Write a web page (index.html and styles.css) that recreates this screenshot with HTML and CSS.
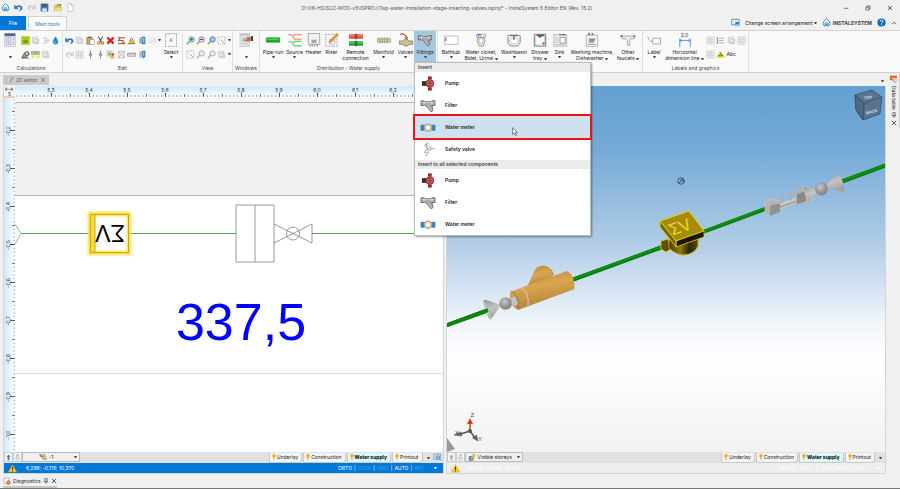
FILE: index.html
```html
<!DOCTYPE html>
<html lang="en">
<head>
<meta charset="utf-8">
<title>InstalSystem 5 Editor</title>
<link rel="stylesheet" href="styles.css">
</head>
<body>
<svg class="sprite" aria-hidden="true">
  <defs>
    <linearGradient id="gCylinder" x1="0" y1="0" x2="1" y2="0"><stop offset="0" stop-color="#4a3d00"/><stop offset=".4" stop-color="#8d7a10"/><stop offset=".7" stop-color="#2c2500"/><stop offset="1" stop-color="#5c4e00"/></linearGradient>
    <linearGradient id="gBrass" x1="0" y1="0" x2=".3" y2="1"><stop offset="0" stop-color="#b98a42"/><stop offset=".45" stop-color="#d9a550"/><stop offset="1" stop-color="#b5843a"/></linearGradient>
    <linearGradient id="gSteel" x1="0" y1="0" x2=".3" y2="1"><stop offset="0" stop-color="#8e8e8e"/><stop offset=".5" stop-color="#c4c4c4"/><stop offset="1" stop-color="#a0a0a0"/></linearGradient>
    <radialGradient id="gBall" cx=".4" cy=".35"><stop offset="0" stop-color="#c8c8c8"/><stop offset="1" stop-color="#8a8a8a"/></radialGradient>
  </defs>
  <symbol id="undo" viewBox="0 0 10 10"><path d="M.5 2v4.500h4L3 5q3-2 4.500.5Q8 7.500 5.500 8.500 9.500 8 9 5 8 1.500 2 3.800z" fill="#2678c8" stroke="#14508f" stroke-width=".4"/></symbol>
  <symbol id="redo" viewBox="0 0 10 10"><path d="M9.500 2v4.500h-4L7 5Q4 3 2.500 5.500 2 7.500 4.500 8.500.5 8 1 5 2 1.500 8 3.800z" fill="#d8d8d8" stroke="#b5b5b5" stroke-width=".4"/></symbol>
  <symbol id="save" viewBox="0 0 10 10"><path d="M1 1h8v8H1z" fill="#3c7fc4" stroke="#2a5a90" stroke-width=".5"/><path d="M2.500 1h5v3.200h-5z" fill="#555"/><path d="M2.500 6h5v3h-5z" fill="#dde8f2"/></symbol>
  <symbol id="open" viewBox="0 0 10 10"><path d="M1 2h3l1 1h4v6H1z" fill="#f0c75a"/><path d="M1 9l1-4h8L9 9z" fill="#f8dc86" stroke="#c79b2b" stroke-width=".3"/><path d="M3.500 3.500Q5 .2 8 1.500L8.300.5 9.500 3l-2.700.6.5-1Q5.500 2 4.500 4z" fill="#39a845"/></symbol>
  <symbol id="page" viewBox="0 0 10 10"><path d="M2 .8h4L8 3v6.200H2zM6 .8V3h2" fill="#fff" stroke="#aaa" stroke-width=".6"/></symbol>
  <symbol id="brand" viewBox="0 0 10 10"><path d="M5 .8Q8.800 3.500 8.800 6q0 2.500-2.300 3V5.500Q5 4 3.500 5.500V9Q1.200 8.500 1.200 6 1.200 3.500 5 .8z" fill="#fff" stroke="#1d86c8" stroke-width="1"/><circle cx="5" cy="7.500" r="1.200" fill="#1d86c8"/></symbol>
  <symbol id="calc" viewBox="0 0 14 16"><path d="M1 .5h12v15H1z" fill="#eceef5" stroke="#9298ae" stroke-width=".6"/><path d="M1 .5h12v3.200H1z" fill="#4e6198"/><path d="M2.500 5.500h7M2.500 8h7M2.500 10.500h7M2.500 13h7" stroke="#9299b4" stroke-width="1.300" stroke-dasharray="1.500 .9"/><path d="M11 5v3M11 10v3.500" stroke="#d4a5a5" stroke-width="1.300"/></symbol>
  <symbol id="grate" viewBox="0 0 10 10"><path d="M0 0h10v10H0z" fill="#a2e22b"/><path d="M2 4.500h6V8H2z" fill="#c98a34"/><path d="M2 2.500h6M3.500 4v4M5 4v4M6.500 4v4" stroke="#8c5f25" stroke-width=".5"/></symbol>
  <symbol id="ghost" viewBox="0 0 10 10"><path d="M1.500 1.500h5.500v6H1.500zM3.500 3.500h5v5h-5z" fill="#eee" stroke="#bbb" stroke-width=".7"/></symbol>
  <symbol id="ghostgrid" viewBox="0 0 10 10"><path d="M1 1h8v8H1zM1 3.500h8M1 6.200h8M3.500 1v8M6.200 1v8" fill="#f4f4f4" stroke="#bdbdbd" stroke-width=".6"/></symbol>
  <symbol id="ghostlist" viewBox="0 0 10 10"><path d="M1.500 1v8" stroke="#888" stroke-width="1.200"/><path d="M3 2.500h6M3 5h5M3 7.500h6" stroke="#b5b5b5" stroke-width="1.200"/></symbol>
  <symbol id="ghostsnow" viewBox="0 0 10 10"><path d="M2 2q3-1 3 3T2 8M5 2q3.500.5 3.500 3T5 8M4 5h4" fill="none" stroke="#c2c2c2" stroke-width="1"/></symbol>
  <symbol id="drop" viewBox="0 0 10 10"><path d="M5 .5Q8 4 8 6.500 7.800 9.500 5 9.500T2 6.500Q2 4 5 .5z" fill="#1f8ad2"/><path d="M3.800 6q0 1.800 1.500 2" fill="none" stroke="#a8dcf7" stroke-width=".9"/></symbol>
  <symbol id="find" viewBox="0 0 10 10"><path d="M.8 8.500L4 3l4-1 1 3-3 3z" fill="#a59a92" stroke="#453d38" stroke-width=".7"/><circle cx="6.500" cy="4" r="2" fill="#e0dcd8" stroke="#333" stroke-width=".8"/><path d="M1 9h8" stroke="#733" stroke-width=".8"/></symbol>
  <symbol id="marker" viewBox="0 0 10 10"><path d="M.5 1.500h9V5h-9z" fill="#cfcfcf" stroke="#777" stroke-width=".5"/><path d="M.5 6.200h3.500v2.800H.5zM6 6.200h3.500v2.800H6z" fill="#f4f11c"/><path d="M2 3.200h6" stroke="#555" stroke-width=".7"/></symbol>
  <symbol id="paste" viewBox="0 0 10 10"><path d="M1 1.500h6V9H1z" fill="#d5a263" stroke="#7d5527" stroke-width=".6"/><path d="M2.500.7h3v1.600h-3z" fill="#666"/><path d="M4.500 4h4.800v5.500H4.500z" fill="#fff" stroke="#888" stroke-width=".6"/></symbol>
  <symbol id="cut" viewBox="0 0 10 10"><path d="M2.500.5l3.500 6M7.500.5l-3.500 6" stroke="#555" stroke-width="1.200"/><circle cx="3" cy="7.800" r="1.400" fill="none" stroke="#d98a14" stroke-width="1.200"/><circle cx="7" cy="7.800" r="1.400" fill="none" stroke="#b8700d" stroke-width="1.200"/></symbol>
  <symbol id="del" viewBox="0 0 10 10"><path d="M1 2.500L2.500 1 5 3.500 7.500 1 9 2.500 6.800 5 9 7.500 7.500 9 5 6.700 2.500 9 1 7.500 3.200 5z" fill="#e02020" stroke="#8d0d0d" stroke-width=".5"/></symbol>
  <symbol id="join" viewBox="0 0 10 10"><path d="M1 2h8M1 8.500h8M3 2v3h4v3.500" fill="none" stroke="#6a4f23" stroke-width="1"/><path d="M4.500 3.500L6 6h3v1.500H5z" fill="#f0a21c"/><circle cx="2" cy="5" r="1" fill="#d24"/></symbol>
  <symbol id="split" viewBox="0 0 10 10"><path d="M1 8.500h8M3 8.500V5l2-3 2 3v3.500" fill="none" stroke="#6a5a43" stroke-width=".9"/><path d="M3.500 4.500h4L9 7.500H2z" fill="#f0b12c"/></symbol>
  <symbol id="upblue" viewBox="0 0 10 10"><path d="M1.500 1.500h3v7h-3z" fill="#aaa"/><path d="M4.500.8h3.700v8.400H4.500z" fill="#2c84ce"/><path d="M6.300 2.500v5M5.300 3.800l1-1.300 1 1.300" fill="none" stroke="#fff" stroke-width=".7"/></symbol>
  <symbol id="downblue" viewBox="0 0 10 10"><path d="M1.500 1.500h3v7h-3z" fill="#bbb"/><path d="M4.500.8h3.700v6.200L6.300 9.800 4.500 7z" fill="#2c84ce"/><path d="M6.300 2v5" stroke="#fff" stroke-width=".7"/></symbol>
  <symbol id="check" viewBox="0 0 10 10"><circle cx="5" cy="5" r="3.500" fill="#f3f3f3" stroke="#d5d5d5" stroke-width=".7"/><path d="M3.300 5l1.300 1.400 2.500-3" fill="none" stroke="#ccc"/></symbol>
  <symbol id="node" viewBox="0 0 10 10"><path d="M5 .5v9" stroke="#777" stroke-width=".9"/><circle cx="5" cy="5" r="1.500" fill="#aaa" stroke="#666" stroke-width=".5"/></symbol>
  <symbol id="mixed" viewBox="0 0 10 10"><path d="M1 1h6v6H1z" fill="#ddd" stroke="#888" stroke-width=".5" stroke-dasharray="1 .5"/><path d="M2.500 3h3v3h-3z" fill="#8fae82"/><circle cx="7.500" cy="5" r="1.400" fill="#d33"/><path d="M5 6.500h4v3H5z" fill="#e8c21d"/></symbol>
  <symbol id="cross" viewBox="0 0 10 10"><path d="M2 1.500h6v7H2zM1 1l8 8M9 1L1 9" fill="none" stroke="#aaa" stroke-width=".8"/></symbol>
  <symbol id="rule" viewBox="0 0 10 10"><path d="M.5 3.500h9V7h-9z" fill="#ddd" stroke="#777" stroke-width=".6"/><path d="M2 3.500v1.500M4 3.500v1.500M6 3.500v1.500M8 3.500v1.500" stroke="#666" stroke-width=".5"/></symbol>
  <symbol id="selectA" viewBox="0 0 14 16"><path d="M.7.7h12.600v14.600H.7z" fill="none" stroke="#8b8b8b" stroke-width=".9" stroke-dasharray="2 1.200"/></symbol>
  <symbol id="zoomin" viewBox="0 0 10 10"><path d="M1 9.200l3-3.400" stroke="#d2923f" stroke-width="1.700"/><circle cx="6.200" cy="3.800" r="2.900" fill="#dcefff" stroke="#3b78b8" stroke-width=".9"/><path d="M6.200 2v3.600M4.400 3.800H8" stroke="#1c9c30" stroke-width="1.300"/></symbol>
  <symbol id="zoomout" viewBox="0 0 10 10"><path d="M1 9.200l3-3.400" stroke="#d2923f" stroke-width="1.700"/><circle cx="6.200" cy="3.800" r="2.900" fill="#eaf2ff" stroke="#3b78b8" stroke-width=".9"/><path d="M4.400 3.800H8" stroke="#c22" stroke-width="1.400"/></symbol>
  <symbol id="zoomall" viewBox="0 0 10 10"><path d="M1 9.200l3-3.400" stroke="#d2923f" stroke-width="1.700"/><circle cx="6.200" cy="3.800" r="2.900" fill="#a9cdf2" stroke="#2660a8" stroke-width=".9"/></symbol>
  <symbol id="zoomfit" viewBox="0 0 10 10"><path d="M1 9.200l3-3.400" stroke="#d2a36f" stroke-width="1.400"/><circle cx="6.200" cy="3.800" r="2.900" fill="#e4f1fb" stroke="#7ba3c8" stroke-width=".9"/></symbol>
  <symbol id="marquee" viewBox="0 0 10 10"><path d="M1 1h8v8H1z" fill="none" stroke="#aaa" stroke-width=".9" stroke-dasharray="1.500 .8"/><path d="M4 4l4 4" stroke="#999"/></symbol>
  <symbol id="windows" viewBox="0 0 16 16"><path d="M1 .5h11v15H1z" fill="#e2e2e2" stroke="#bbb" stroke-width=".6"/><path d="M1 .5h11V3H1z" fill="#c9c9c9"/><path d="M3 6h5M3 9h7M3 12h7" stroke="#bbb"/><path d="M15.500 4v4.500l-5 1.500-5.500-1.500Q4 7 6 7l3 .5-1-2.500z" fill="#b87555"/><path d="M14 3.500h2v5.500h-2z" fill="#2d3b52"/></symbol>
  <symbol id="pipe" viewBox="0 0 16 16"><path d="M.5 5.500h15v5H.5z" fill="#12b81e" stroke="#0a7412" stroke-width=".7"/><path d="M1 7h14" stroke="#83f089" stroke-width=".8"/></symbol>
  <symbol id="source" viewBox="0 0 16 16"><path d="M15.500 2H7L5.500 4 4 2H.5M15.500 7H7L5.500 4.500" fill="none" stroke="#f06a58" stroke-width="1.100"/><path d="M15.500 9.500H7L5.500 12 4 10H.5M15.500 14.800H7L5.500 12.500" fill="none" stroke="#30c04a" stroke-width="1.100"/></symbol>
  <symbol id="heater" viewBox="0 0 16 16"><path d="M1.500.5h13V13h-13z" fill="#f2f2f2" stroke="#888" stroke-width=".8"/><path d="M5.500 8h5v3h-5z" fill="#9bb" stroke="#777" stroke-width=".5"/><path d="M3.500 15.500v-2M6 15.500v-2" stroke="#d33"/><path d="M9 15.500v-2M12 15.500v-2" stroke="#65d"/></symbol>
  <symbol id="riser" viewBox="0 0 16 16"><path d="M.8 1.500h13v13.700H.8z" fill="none" stroke="#777" stroke-width=".8" stroke-dasharray="1.700 1.200"/><circle cx="8" cy="10" r="3.500" fill="none" stroke="#aaa" stroke-width=".8"/><path d="M5 11l1-3 7.500-7.500L15.500 2 8 10z" fill="#efa12a" stroke="#8c6230" stroke-width=".5"/></symbol>
  <symbol id="remote" viewBox="0 0 16 16"><path d="M0 1.500h7v5H0zM9 1.500h7v5H9z" fill="#e9513c"/><path d="M0 3h16" stroke="#f9a08c" stroke-width=".8"/><path d="M6.500 1h3v6h-3z" fill="#8c4a43"/><path d="M0 9.500h7v5H0zM9 9.500h7v5H9z" fill="#1cad2c"/><path d="M0 11h16" stroke="#7fe08c" stroke-width=".8"/><path d="M6.500 9h3v6h-3z" fill="#3f6c45"/></symbol>
  <symbol id="manifold" viewBox="0 0 16 16"><path d="M.5 6.500h15v4H.5z" fill="#d5d49a" stroke="#8c8e64" stroke-width=".7"/><path d="M3 5v7M6 5v7M9 5v7M12 5v7" stroke="#9a9d6e" stroke-width="1"/></symbol>
  <symbol id="valves" viewBox="0 0 16 16"><path d="M1 1.500q6-1.500 7 3" fill="none" stroke="#cf4b38" stroke-width="1.400"/><path d="M7 4h3v4H7z" fill="#8a7f60"/><path d="M.5 9h3.500L8 6.500 12 9h3.500v4H12l-3 2H7l-3-2H.5z" fill="#cbbf94" stroke="#6f6748" stroke-width=".7"/></symbol>
  <symbol id="filter" viewBox="0 0 16 16"><path d="M.5 3h3.500v1H12V3h3.500v5H12V7.500L13.500 13l-2 2L5.500 8 4 7.500V8H.5z" fill="#a7a7a7" stroke="#585858" stroke-width=".8"/><path d="M4 3.500v4M12 3.500v4M1 5h14M7.500 8.500l4.500 5" stroke="#e4e4e4" stroke-width=".7"/></symbol>
  <symbol id="bath" viewBox="0 0 18 16"><path d="M1.500 3.500H17v9.500H1.500z" fill="#fff" stroke="#a5a5a5" stroke-width=".8"/><path d="M2 8h2" stroke="#d33" stroke-width="1.400"/><path d="M2 6h2" stroke="#44c"/></symbol>
  <symbol id="wc" viewBox="0 0 16 16"><path d="M3 1.500h10V5H3z" fill="#eee" stroke="#888" stroke-width=".7"/><path d="M4 1h4v2H4z" fill="#6a72d8"/><path d="M4.500 5h7l1 4-2 6H6L3.500 9z" fill="#e6e6e6" stroke="#777" stroke-width=".8"/><ellipse cx="8" cy="9" rx="2.200" ry="3" fill="#fff" stroke="#999" stroke-width=".6"/></symbol>
  <symbol id="basin" viewBox="0 0 16 16"><path d="M1 3h14v8q-1 4-7 4t-7-4z" fill="#f7f7f7" stroke="#666" stroke-width=".9"/><ellipse cx="8" cy="9" rx="5" ry="3.500" fill="#fff" stroke="#999" stroke-width=".7"/><path d="M8 2v6" stroke="#555" stroke-width="1.300"/><path d="M4 2.500h3" stroke="#d33" stroke-width="1.300"/><path d="M9 2.500h3" stroke="#44c" stroke-width="1.300"/></symbol>
  <symbol id="shower" viewBox="0 0 16 16"><path d="M1.500 1.500h13v13.500h-13z" fill="#fff" stroke="#666" stroke-width="1"/><path d="M3 4h10v9.500H3z" fill="none" stroke="#aaa" stroke-width=".6"/><circle cx="12" cy="12" r="1.300" fill="#a55"/><path d="M5 2h6l-2 3H7z" fill="#555"/><path d="M4 2.500h2" stroke="#d33" stroke-width="1.500"/><path d="M10 2.500h3" stroke="#44c" stroke-width="1.500"/></symbol>
  <symbol id="sink" viewBox="0 0 16 16"><path d="M1 2h14.500v13H1z" fill="#f4f4f4" stroke="#999" stroke-width=".8"/><path d="M8 5h6v6.500H8z" fill="#fff" stroke="#777" stroke-width=".8"/><path d="M2.500 5.500h4M2.500 8h4M2.500 10.500h4M2.500 13h11" stroke="#b5b5b5"/><path d="M7 2h3" stroke="#d33" stroke-width="1.500"/><path d="M11 2h3" stroke="#44c" stroke-width="1.500"/></symbol>
  <symbol id="washer" viewBox="0 0 16 16"><path d="M1.500 2.500h13v13h-13z" fill="#fafafa" stroke="#999" stroke-width=".8"/><path d="M4.500 6h8l-2.500 5H4z" fill="#999"/><path d="M3 13h10" stroke="#888"/><circle cx="4.500" cy="1.300" r="1.200" fill="#5a62d8"/><circle cx="8.500" cy="1.300" r="1.200" fill="#d84c3c"/></symbol>
  <symbol id="faucet" viewBox="0 0 16 16"><path d="M1 3.500h14v3h-4L10 8.500V14H7.500V8.500L5 6.500H1z" fill="#eee" stroke="#888" stroke-width=".8"/><path d="M.5 2.500v2" stroke="#44c" stroke-width="1.800"/><path d="M15.500 2.500v2" stroke="#d33" stroke-width="1.800"/></symbol>
  <symbol id="label" viewBox="0 0 16 16"><path d="M6.500 6h9v6.500h-9zM6.500 9.500L4 9.500 .5 4" fill="#fff" stroke="#888" stroke-width=".8"/></symbol>
  <symbol id="dimension" viewBox="0 0 16 16"><path d="M2 6.500V16M14 6.500V16M2 8.500h12M4 7L2.200 8.500 4 10M12 7l1.800 1.500L12 10" fill="none" stroke="#3d8fe0" stroke-width="1"/></symbol>
  <symbol id="brush" viewBox="0 0 10 10"><path d="M0 6.500h9.500v2H1z" fill="#f0e010"/><path d="M2 5h6v2H2z" fill="#8b9a20"/><path d="M4 2.500L6.500 5" stroke="#a36b34" stroke-width="1.300"/></symbol>
  <symbol id="screens" viewBox="0 0 10 10"><path d="M.8 1.500h8.400v6H.8z" fill="#dff0fc" stroke="#3b86c6" stroke-width=".9"/><path d="M4.500 4h5v5h-5z" fill="#2a80c9" stroke="#fff" stroke-width=".5"/><path d="M5.500 7.800h3" stroke="#fff"/></symbol>
  <symbol id="help" viewBox="0 0 10 10"><circle cx="5" cy="5" r="4.500" fill="#0a63c4"/><path d="M3.500 4q0-1.700 1.600-1.700T6.600 4q0 .9-1.500 1.700v.6M5.100 7v1" fill="none" stroke="#fff" stroke-width="1.100"/></symbol>
  <symbol id="bulb" viewBox="0 0 10 10"><path d="M2.500.5h5q1.500 3.500-1.500 5.500L5.800 9.500H4L3.800 6Q1 4 2.500.5z" fill="#f3a81d"/></symbol>
  <symbol id="up" viewBox="0 0 10 10"><path d="M5 1l3 3H6.300v5H3.700V4H2z" fill="currentColor"/></symbol>
  <symbol id="down" viewBox="0 0 10 10"><path d="M5 9l3-3H6.300V1H3.700v5H2z" fill="#eee" stroke="#8d8d8d" stroke-width=".7"/></symbol>
  <symbol id="warn" viewBox="0 0 10 10"><path d="M5 .8L9.700 9H.3z" fill="#ffc928" stroke="#c98f09" stroke-width=".5"/><path d="M5 3.200v3M5 7v1.200" stroke="#222" stroke-width="1.100"/></symbol>
  <symbol id="storey" viewBox="0 0 10 10"><path d="M.5 2h7l2 6h-4z" fill="#e9d7a1" stroke="#8a7440" stroke-width=".6"/><path d="M1 4h6M1 1.500l7 7" stroke="#555" stroke-width=".7"/></symbol>
  <symbol id="building" viewBox="0 0 10 10"><path d="M1 4h5v5.500H1z" fill="#4b68a8"/><path d="M2 5h1v1H2zM4 5h1v1H4zM2 7h1v1H2zM4 7h1v1H4z" fill="#e5ecf8"/><path d="M5.500 1.500L9 .8v2L7.500 9H6z" fill="#f0bb2c"/></symbol>
  <symbol id="globe" viewBox="0 0 10 10"><path d="M.8 1h7.500v6H.8z" fill="#b9dcf3" stroke="#5a92b8" stroke-width=".6"/><path d="M5 4l4.500 4.500" stroke="#c98" stroke-width="1.300"/><circle cx="5.500" cy="5" r="2" fill="#7fc0e8" stroke="#467" stroke-width=".5"/></symbol>
  <symbol id="sheet" viewBox="0 0 10 10"><path d="M1.500 1h6v7.500h-6z" fill="#fff" stroke="#888" stroke-width=".7"/><circle cx="6.800" cy="7" r="2.600" fill="#e2502f"/><path d="M5.800 6l2 2M7.800 6l-2 2" stroke="#fff" stroke-width=".8"/></symbol>
  <symbol id="datatable" viewBox="0 0 10 10"><path d="M1 .8h8v5H1z" fill="#e25b2d"/><path d="M2 3h7v5L5 5.500z" fill="#f3c79a"/><path d="M4 6l4 3" stroke="#7a88b8"/></symbol>
  <symbol id="pencil" viewBox="0 0 10 10"><path d="M.8 2h6v7h-6z" fill="#ccd7e2" stroke="#999" stroke-width=".5"/><path d="M4 8l.5-2L8.500.8 9.700 2 5.500 7z" fill="#dfb060" stroke="#846" stroke-width=".3"/></symbol>
  <symbol id="pin" viewBox="0 0 10 10"><path d="M3 1h4v5H3zM1.500 6.200h7M5 6.500V10" fill="none" stroke="#444" stroke-width="1.100"/></symbol>
  <symbol id="close" viewBox="0 0 10 10"><path d="M1.500 1.500l7 7M8.500 1.500l-7 7" stroke="currentColor" stroke-width="1.200"/></symbol>
  <symbol id="minimize" viewBox="0 0 10 10"><path d="M1 5.500h8" stroke="#333" stroke-width="1"/></symbol>
  <symbol id="restore" viewBox="0 0 10 10"><path d="M1.500 3.500h5v5h-5zM3.500 3.500v-2h5v5h-2" fill="none" stroke="#333" stroke-width="1"/></symbol>
  <symbol id="collapse" viewBox="0 0 10 10"><path d="M1.500 7L5 3.500 8.500 7" fill="none" stroke="#444" stroke-width="1.300"/></symbol>
  <symbol id="pump" viewBox="0 0 16 16"><path d="M8 .5h4v3H8zM8 12.500h4v3H8z" fill="#8c1c1c"/><path d="M9 2h2v12H9z" fill="#b53a3a"/><path d="M1.500 5.500h4.500v5H1.500z" fill="#3a2a2a"/><circle cx="10" cy="8" r="4.200" fill="#c46060" stroke="#7a1c1c" stroke-width=".8"/><path d="M7.500 8h5M8.200 6h3.600M8.200 10h3.600" stroke="#7e3434" stroke-width=".8"/></symbol>
  <symbol id="meter" viewBox="0 0 16 16"><path d="M.5 5.500H4V11H.5zM12 5.500h3.500V11H12z" fill="#2d86d8" stroke="#1a558e" stroke-width=".5"/><circle cx="8" cy="8.200" r="4" fill="#e9e2c8" stroke="#a08c54" stroke-width="1"/><circle cx="8" cy="8.200" r="2" fill="#fff" stroke="#bbb" stroke-width=".5"/></symbol>
  <symbol id="safety" viewBox="0 0 16 16"><path d="M6.500 1v6M4 3l5-1.500M4 5l5-1.500M6.500 7L4 11.500h5zM6.500 7l4.500-2v4zM11 7h4.500" fill="none" stroke="#999" stroke-width=".8"/><path d="M5.500 13h2v2h-2z" fill="#a8a8ea"/></symbol>
</svg>

<header class="titlebar">
  <nav class="quick" aria-label="Quick access">
    <button aria-label="InstalSystem"><svg class="i"><use href="#brand"/></svg></button>
    <button aria-label="Undo"><svg class="i"><use href="#undo"/></svg></button>
    <button aria-label="Redo"><svg class="i"><use href="#redo"/></svg></button>
    <button aria-label="Save"><svg class="i"><use href="#save"/></svg></button>
    <button aria-label="Open"><svg class="i"><use href="#open"/></svg></button>
    <button aria-label="New"><svg class="i"><use href="#page"/></svg></button>
  </nav>
  <h1>D:\06-HS\SUZ-WOD-v5\ISPROJ\Tap-water-installation-stage-inserting-valves.isproj* - InstalSystem 5 Editor EN (Rev. 15.2)</h1>
  <div class="winbtns">
    <button aria-label="Minimize"><svg class="xs"><use href="#minimize"/></svg></button>
    <button aria-label="Restore"><svg class="xs"><use href="#restore"/></svg></button>
    <button aria-label="Close"><svg class="xs"><use href="#close"/></svg></button>
  </div>
</header>

<div class="tabrow">
  <button class="file">File</button>
  <button class="maintab">Main tools</button>
  <div class="tabright">
    <svg class="i"><use href="#screens"/></svg>
    <button class="arrange">Change screen arrangement <b class="arrow"></b></button>
    <span class="logo"><svg class="i"><use href="#brand"/></svg>INSTALSYSTEM</span>
    <button aria-label="Help"><svg class="i"><use href="#help"/></svg></button>
    <button aria-label="Collapse ribbon"><svg class="xs"><use href="#collapse"/></svg></button>
  </div>
</div>

<div class="ribbon">
  <section class="group g-calc">
    <div class="tools">
      <button class="tool" aria-label="Calculate"><svg class="l"><use href="#calc"/></svg><span></span><b class="arrow"></b></button>
      <div class="mini m4">
        <svg><use href="#grate"/></svg><svg><use href="#ghost"/></svg><svg><use href="#ghostsnow"/></svg><svg><use href="#drop"/></svg>
        <svg><use href="#find"/></svg><svg><use href="#marker"/></svg><svg><use href="#ghost"/></svg>
      </div>
    </div>
    <h2>Calculations</h2>
  </section>
  <section class="group g-edit">
    <div class="tools">
      <div class="mini m9">
        <svg><use href="#undo"/></svg><svg><use href="#ghost"/></svg><svg><use href="#paste"/></svg><svg><use href="#cut"/></svg><svg><use href="#del"/></svg><svg><use href="#join"/></svg><svg><use href="#split"/></svg><svg><use href="#upblue"/></svg><svg><use href="#check"/></svg><b class="arrow"></b>
        <svg><use href="#redo"/></svg><svg><use href="#ghostgrid"/></svg><svg><use href="#node"/></svg><svg><use href="#node"/></svg><svg><use href="#mixed"/></svg><svg><use href="#cross"/></svg><svg><use href="#rule"/></svg><svg><use href="#downblue"/></svg>
      </div>
      <button class="tool"><span class="boxed">A<svg class="l"><use href="#selectA"/></svg></span><span>Select</span><b class="arrow"></b></button>
    </div>
    <h2>Edit</h2>
  </section>
  <section class="group g-view">
    <div class="tools">
      <div class="mini m5">
        <svg><use href="#zoomin"/></svg><svg><use href="#zoomout"/></svg><svg><use href="#zoomall"/></svg><svg><use href="#marquee"/></svg><b class="arrow"></b>
        <svg><use href="#marquee"/></svg><svg><use href="#zoomfit"/></svg><svg><use href="#zoomfit"/></svg><svg><use href="#ghost"/></svg><b class="arrow"></b>
      </div>
    </div>
    <h2>View</h2>
  </section>
  <section class="group g-win">
    <div class="tools">
      <button class="tool" aria-label="Windows"><svg class="l"><use href="#windows"/></svg><span></span><b class="arrow"></b></button>
    </div>
    <h2>Windows</h2>
  </section>
  <section class="group g-dist">
    <div class="tools">
      <button class="tool"><svg class="l"><use href="#pipe"/></svg><span>Pipe-run</span><b class="arrow"></b></button>
      <button class="tool"><svg class="l"><use href="#source"/></svg><span>Source</span><b class="arrow"></b></button>
      <button class="tool"><svg class="l"><use href="#heater"/></svg><span>Heater</span></button>
      <button class="tool"><svg class="l"><use href="#riser"/></svg><span>Riser</span></button>
      <button class="tool"><svg class="l"><use href="#remote"/></svg><span>Remote<br>connection</span></button>
      <button class="tool"><svg class="l"><use href="#manifold"/></svg><span>Manifold</span><b class="arrow"></b></button>
      <button class="tool"><svg class="l"><use href="#valves"/></svg><span>Valves</span><b class="arrow"></b></button>
      <div class="dropdown">
        <button class="tool active" aria-expanded="true"><svg class="l"><use href="#filter"/></svg><span>Fittings</span><b class="arrow"></b></button>
        <div class="menu" role="menu">
          <h3>Insert</h3>
          <button role="menuitem"><svg><use href="#pump"/></svg>Pump</button>
          <button role="menuitem"><svg><use href="#filter"/></svg>Filter</button>
          <button role="menuitem" class="hover"><svg><use href="#meter"/></svg>Water meter
            <svg class="cursor" viewBox="0 0 10 16"><path d="M1 1v11l2.700-2.500 2 4.500 2-.9-2-4.400H9z" fill="#fff" stroke="#333" stroke-width="1"/></svg></button>
          <button role="menuitem"><svg><use href="#safety"/></svg>Safety valve</button>
          <h3>Insert to all selected components</h3>
          <button role="menuitem"><svg><use href="#pump"/></svg>Pump</button>
          <button role="menuitem"><svg><use href="#filter"/></svg>Filter</button>
          <button role="menuitem"><svg><use href="#meter"/></svg>Water meter</button>
        </div>
      </div>
    </div>
    <h2>Distribution - Water supply</h2>
  </section>
  <section class="group g-fix">
    <div class="tools">
      <button class="tool"><svg class="l"><use href="#bath"/></svg><span>Bathtub</span><b class="arrow"></b></button>
      <button class="tool"><svg class="l"><use href="#wc"/></svg><span>Water closet,<br>Bidet, Urinal <b class="arrow"></b></span></button>
      <button class="tool"><svg class="l"><use href="#basin"/></svg><span>Washbasin</span><b class="arrow"></b></button>
      <button class="tool"><svg class="l"><use href="#shower"/></svg><span>Shower<br>tray <b class="arrow"></b></span></button>
      <button class="tool"><svg class="l"><use href="#sink"/></svg><span>Sink</span><b class="arrow"></b></button>
      <button class="tool"><svg class="l"><use href="#washer"/></svg><span>Washing machine,<br>Dishwasher <b class="arrow"></b></span></button>
      <button class="tool"><svg class="l"><use href="#faucet"/></svg><span>Other<br>faucets <b class="arrow"></b></span></button>
    </div>
  </section>
  <section class="group g-label">
    <div class="tools">
      <button class="tool"><svg class="l"><use href="#label"/></svg><span>Label</span><b class="arrow"></b></button>
      <button class="tool"><span class="boxed num">2.0<svg class="l"><use href="#dimension"/></svg></span><span>Horizontal<br>dimension line <b class="arrow"></b></span></button>
      <div class="mini m4">
        <svg><use href="#ghostgrid"/></svg><svg><use href="#ghostlist"/></svg><svg><use href="#ghost"/></svg><svg><use href="#ghostgrid"/></svg>
        <svg><use href="#ghostgrid"/></svg><svg><use href="#brush"/></svg><span>Abc</span>
      </div>
    </div>
    <h2>Labels and graphics</h2>
  </section>
</div>

<main class="workspace">
  <div class="left">
    <div class="strip"><span class="doctab"><svg class="s"><use href="#pencil"/></svg>2D editor<svg class="xs"><use href="#close"/></svg></span></div>
    <section class="pane">
      <div class="rulers">
        <svg class="corner" viewBox="0 0 12 12"><path d="M2 1v4M2 3h7M3.500 1.800L2 3l1.500 1.200M9 1v4M7.500 1.800L9 3 7.500 4.200" fill="none" stroke="#444" stroke-width=".6"/><path d="M0 11.500h12" stroke="#e39a6c"/><text x="6" y="10">S</text></svg>
        <svg class="rtop">
          <defs>
            <pattern id="tx" x="-2" width="38" height="12" patternUnits="userSpaceOnUse"><path d="M.5 7v4" stroke="#555" stroke-width="1"/><path d="M19.500 8v3" stroke="#777"/><path d="M4.300 9v2M8.100 9v2M11.900 9v2M15.700 9v2M23.300 9v2M27.100 9v2M30.900 9v2M34.700 9v2" stroke="#888" stroke-width=".8"/></pattern>
          </defs>
          <rect width="100%" height="12" fill="url(#tx)"/>
          <text x="36" y="6">5,3</text><text x="74" y="6">5,4</text><text x="112" y="6">5,5</text><text x="150" y="6">5,6</text><text x="188" y="6">5,7</text><text x="226" y="6">5,8</text><text x="264" y="6">5,9</text><text x="302" y="6">6,0</text><text x="340" y="6">6,1</text><text x="378" y="6">6,2</text>
        </svg>
        <svg class="rleft">
          <defs>
            <pattern id="ty" y="-6" width="12" height="38" patternUnits="userSpaceOnUse"><path d="M6 .5h5" stroke="#555"/><path d="M8 19.500h3" stroke="#777"/><path d="M9.500 4.300h2M9.500 8.100h2M9.500 11.900h2M9.500 15.700h2M9.500 23.300h2M9.500 27.100h2M9.500 30.900h2M9.500 34.700h2" stroke="#888" stroke-width=".8"/></pattern>
          </defs>
          <rect width="12" height="100%" fill="url(#ty)"/>
          <text transform="translate(6 33) rotate(-90)">-0,2</text><text transform="translate(6 71) rotate(-90)">-0,3</text><text transform="translate(6 109) rotate(-90)">-0,4</text><text transform="translate(6 147) rotate(-90)">-0,5</text><text transform="translate(6 185) rotate(-90)">-0,6</text><text transform="translate(6 223) rotate(-90)">-0,7</text><text transform="translate(6 261) rotate(-90)">-0,8</text><text transform="translate(6 299) rotate(-90)">-0,9</text><text transform="translate(6 337) rotate(-90)">-1,0</text>
        </svg>
        <svg class="drawing" viewBox="15 98 428 354" preserveAspectRatio="xMinYMin slice">
          <defs><filter id="glow" x="-20%" y="-20%" width="140%" height="140%"><feGaussianBlur stdDeviation="1"/></filter></defs>
          <path d="M15 102.500h428V195H15z" fill="#f1f1f1"/>
          <path d="M15 98h428v4H15z" fill="#f8f8f8"/>
          <path d="M15 102.500h428M15 195.500h428" stroke="#b4b4b4"/>
          <path d="M15 373.500h428" stroke="#dcdcf2"/>
          <path d="M21 233.500h68M129 233.500h107M312 233.500h131" stroke="#4da64d"/>
          <path d="M15 224l6 9.500L15 244" fill="none" stroke="#888" stroke-width=".7"/>
          <path d="M90 214h39v39H90z" fill="none" stroke="#f8dc38" stroke-width="4" filter="url(#glow)"/>
          <path d="M90 214h5v39h-5z" fill="#f6dc3c"/>
          <path d="M90.500 214.500h38v38h-38zM95 214v38.500" fill="none" stroke="#c9a90c" stroke-width="1"/>
          <text class="sigma" transform="translate(110 225) rotate(180)">ΣV</text>
          <g fill="none" stroke="#808080" stroke-width=".8"><path d="M236 205h38v57h-38zM255 205v57"/><path d="M274 224l38 19v-19l-38 19" stroke="#555" stroke-width=".6"/><circle cx="293" cy="233.500" r="6.500" stroke="#555" stroke-width=".6"/></g>
          <text class="bignum" x="241" y="340">337,5</text>
        </svg>
      </div>
      <div class="layers">
        <button class="nav on" aria-label="Storey up"><svg><use href="#up"/></svg></button><button class="nav" aria-label="Storey down"><svg><use href="#down"/></svg></button>
        <button class="combo"><svg class="s"><use href="#storey"/></svg>-1<b class="arrow"></b></button>
        <div class="tabs">
          <button><svg><use href="#bulb"/></svg>Underlay</button><button><svg><use href="#bulb"/></svg>Construction</button><button class="on"><svg><use href="#bulb"/></svg>Water supply</button><button><svg><use href="#bulb"/></svg>Printout</button>
          <b class="arrow"></b><svg class="i"><use href="#globe"/></svg>
        </div>
      </div>
      <div class="status">
        <svg class="i"><use href="#warn"/></svg><span class="coords">6,296; -0,115; 10,370</span>
        <span class="modes"><span>ORTO</span>|<i>LOCK</i>|<i>GRID</i>|<span>AUTO</span>|<i>REP</i></span><b class="arrow"></b>
      </div>
    </section>
  </div>
  <div class="right">
    <div class="strip end"><b class="arrow"></b></div>
    <section class="pane">
      <svg class="scene" viewBox="446 86 440 366" preserveAspectRatio="xMinYMin slice">
        <defs><linearGradient id="sky" x1="0" y1="0" x2="0" y2="1"><stop offset="0" stop-color="#649fd1"/><stop offset=".17" stop-color="#74aad6"/><stop offset=".42" stop-color="#aecbe6"/><stop offset=".65" stop-color="#f2f6fb"/><stop offset=".74" stop-color="#fff"/><stop offset="1" stop-color="#f2f2f2"/></linearGradient></defs>
        <path d="M446 86h440v366H446z" fill="url(#sky)"/>
        <g stroke="#07750c" stroke-width="4"><path d="M446 325l42-15M571 280l93-34M702 232l66-24.500M841 181.500l46-17"/></g>
        <g stroke="#0c900f" stroke-width="2.400"><path d="M446 324.500l42-15M571 279.500l93-34M702 231.500l66-24.500M841 181l46-17"/></g>
        <path d="M482 301q1-1.500 3-1l15 5-10 14.500q-3-1.500-4-5z" fill="url(#gSteel)"/>
        <path d="M482 301q4 3 4.500 10l4 8.500" fill="none" stroke="#ccc" stroke-width="1"/>
        <path d="M445 325.500l42-15.500" stroke="#0c850c" stroke-width="3.500"/>
        <circle cx="504.700" cy="303.500" r="6.300" fill="url(#gBall)"/>
        <path d="M525 289l8-17q2-7 9-6 9 2 10 9l-3 8z" fill="url(#gBrass)"/>
        <path d="M541 266q10 1 11 9" fill="none" stroke="#b58236" stroke-width="1"/>
        <path d="M509 292l57-21q8 4 7.500 18l-56.500 21q-9-4-8-18z" fill="url(#gBrass)"/>
        <path d="M510 291q8 4 7.500 18" fill="none" stroke="#9a7138" stroke-width=".8"/>
        <path d="M520.500 287.500q8 5 6.500 18" fill="none" stroke="#ddd" stroke-width=".8"/>
        <path d="M510 298l4-2 3 7-2 3-4-1z" fill="#c2c2ca"/>
        <path d="M660 241l7-2 3 10-5 3-5-3z" fill="#5d4f05" stroke="#e8cc10" stroke-width=".8"/>
        <path d="M668 240v8q7 7 15 7 11-1 14-9v-11z" fill="url(#gCylinder)" stroke="#cdb409" stroke-width=".8"/>
        <path d="M659 221l29-10 15 20-28 10z" fill="#a48c10" stroke="#f0d400" stroke-width="1"/>
        <path d="M675 241l28-10v6l-28 10z" fill="#181400" stroke="#f0d400" stroke-width=".8"/>
        <path d="M659 221v6l16 20v-6z" fill="#77650a" stroke="#f0d400" stroke-width=".8"/>
        <text class="sigma3d" transform="translate(682 232) rotate(-19) skewX(12)">ΣV</text>
        <path d="M764 203l6-4 9 2v11l-11 4-4-3z" fill="#b4b4b4" stroke="#cfcfcf" stroke-width=".6"/>
        <path d="M769 206l10-3v9l-10 4z" fill="#929292"/>
        <path d="M779 203l17-6v6l-17 6z" fill="#c8c8c8"/><path d="M779 207l17-6" stroke="#888"/>
        <path d="M779 196h3v7h-3zM788 192h3v8h-3z" fill="#b0b0b0"/>
        <path d="M794 191l10-5 7 12-3 6-13 1z" fill="#b2b2b2"/><path d="M796 194l9-3v10l-9 3z" fill="#8a8a8a"/>
        <path d="M802 186l15 4.500-10 13z" fill="url(#gSteel)" stroke="#ccc" stroke-width=".5"/>
        <circle cx="820.500" cy="189" r="6.500" fill="url(#gBall)"/>
        <path d="M826 184.500l10-11.500q7 6 7.500 19l-17-4z" fill="url(#gSteel)"/>
        <g fill="none" stroke="#345064" stroke-width=".9"><circle cx="680" cy="181" r="3.200"/><path d="M677 183q5-1 5-5M679 180h4v3"/></g>
        <g stroke="#364b5e" stroke-width=".7"><path d="M854 95l17-5 10 7-2 17-17 6-7-10z" fill="#58748e"/><path d="M854 95l9 8 18-6M863 103l-1 17" fill="none"/><path d="M854 95l9 8-1 17-7-10z" fill="#4e697f"/></g>
        <text class="cube" transform="translate(871 113) rotate(-16)">BACK</text><text class="cube" transform="translate(867 99) rotate(-8)">TOP</text>
        <path d="M446 438l8 11-8 3z" fill="#999"/>
        <g stroke="#555" stroke-width="1.500"><path d="M469 431v-10" stroke="#c8401c"/><path d="M469 431l-11 3.500M469 431l5 7"/></g>
        <path d="M469 418l3 6h-6z" fill="#e03c10"/><path d="M453 435l7-3 1 4zM477 441l-5.500-3 4-3z" fill="#666" stroke="#444" stroke-width=".5"/><circle cx="469" cy="431" r="2" fill="#555"/>
        <text class="axis" x="469.500" y="417">Z</text><text class="axis" x="477" y="441">Y</text><text class="axis" x="454" y="435">X</text>
      </svg>
      <div class="layers">
        <button class="nav" aria-label="Storey up"><svg><use href="#up"/></svg></button><button class="nav" aria-label="Storey down"><svg><use href="#down"/></svg></button>
        <button class="combo"><svg class="s"><use href="#building"/></svg>Visible storeys<b class="arrow"></b></button>
        <div class="tabs">
          <button><svg><use href="#bulb"/></svg>Underlay</button><button><svg><use href="#bulb"/></svg>Construction</button><button class="on"><svg><use href="#bulb"/></svg>Water supply</button><button><svg><use href="#bulb"/></svg>Printout</button>
          <b class="arrow"></b>
        </div>
      </div>
      <div class="status idle">
        <svg class="i"><use href="#warn"/></svg><span class="coords">6,042; -0,559; -2,793</span>
        <span class="modes"><span>ORTO</span>|<i>LOCK</i>|<i>GRID</i>|<span>AUTO</span>|<i>REP</i></span><b class="arrow"></b>
      </div>
    </section>
  </div>
  <aside class="side"><div class="sidetab"><svg class="i"><use href="#datatable"/></svg><span>Data table</span><svg class="xs"><use href="#pin"/></svg><svg class="xs"><use href="#close"/></svg></div></aside>
</main>

<footer class="dock"><span class="docktab"><svg class="s"><use href="#sheet"/></svg>Diagnostics<svg class="xs"><use href="#pin"/></svg><svg class="xs"><use href="#close"/></svg></span></footer>
</body>
</html>
```
FILE: styles.css
```css
* { box-sizing: border-box; }
body {
  margin: 0;
  min-height: 100vh;
  display: flex;
  flex-direction: column;
  background: #f0f0f0;
  color: #222;
  font: 5px/6px Inter, "Open Sans", sans-serif;
  white-space: nowrap;
}
button {
  font: inherit;
  color: inherit;
  background: none;
  border: 0;
  padding: 0;
  margin: 0;
}
h1, h2, h3 { font: inherit; margin: 0; }
svg { display: block; flex: none; }
.sprite { position: absolute; width: 0; height: 0; }
.i { width: 9px; height: 9px; }
.s { width: 8px; height: 8px; }
.xs { width: 6px; height: 6px; }
.l { width: 16px; height: 14px; }
.arrow {
  display: inline-block;
  border: 1px solid transparent;
  border-top: 2px solid #444;
  border-bottom: 0;
  width: 3px;
  height: 2px;
  flex: none;
  vertical-align: middle;
}

.titlebar { height: 15px; display: flex; align-items: center; padding: 0 7px 0 1px; }
.titlebar h1 { flex: 1; text-align: center; color: #555; }
.quick { display: flex; gap: 4px; width: 78px; }
.winbtns { display: flex; gap: 16px; width: 78px; justify-content: flex-end; }

.tabrow { height: 15px; display: flex; align-items: flex-end; }
.file { width: 26px; height: 14px; background: #0078d7; color: #fff; margin-right: 2px; }
.maintab { width: 39px; height: 14px; background: #fafafa; border: 1px solid #d2d2d2; border-bottom: 0; color: #2478c0; }
.tabright { margin-left: auto; height: 15px; display: flex; align-items: center; gap: 5px; padding-right: 3px; }
.logo { display: flex; align-items: center; gap: 2px; color: #444; font-weight: bold; }

.ribbon { height: 43px; display: flex; background: #f9f9f9; border-top: 1px solid #d2d2d2; border-bottom: 1px solid #d0d0d0; }
.group { display: flex; flex-direction: column; border-right: 1px solid #dedede; }
.group h2 { margin-top: auto; height: 8px; line-height: 8px; text-align: center; color: #444; }
.tools { display: grid; height: 32px; }
.g-calc { width: 63px; }
.g-calc .tools { grid-template-columns: 20px 41px; }
.g-edit { width: 120px; }
.g-edit .tools { grid-template-columns: 98px 20px; }
.g-view { width: 50px; }
.g-view .tools { grid-template-columns: 48px; }
.g-win { width: 27px; }
.g-dist { width: 178px; }
.g-dist .tools { grid-template-columns: 22px 21px 17px 19px 29px 27px 17px 22px; padding-left: 2px; }
.g-fix { width: 205px; }
.g-fix .tools { grid-template-columns: 24px 36px 30px 22px 17px 48px 24px; padding-left: 1px; }
.g-label { width: 106px; }
.g-label .tools { grid-template-columns: 20px 41px 42px; padding-left: 1px; }
.tool { display: flex; flex-direction: column; align-items: center; height: 32px; padding-top: 2px; width: 100%; }
.tool > span { margin-top: 2px; min-height: 6px; }
.tool > .arrow { margin-top: 1px; }
.tool > .boxed { margin-top: 0; position: relative; width: 16px; height: 14px; line-height: 14px; color: #777; }
.tool > .num { line-height: 5px; color: #333; }
.boxed svg { position: absolute; top: 0; left: 0; }
.tool.active { background: #a5c8e1; }
.mini { display: grid; grid-auto-rows: 14px; padding-top: 2px; align-items: center; justify-items: center; align-content: start; }
.mini svg { width: 9px; height: 9px; }
.m4 { grid-template-columns: repeat(4, 1fr); }
.m5 { grid-template-columns: repeat(4, 1fr) 4px; padding-left: 2px; }
.m9 { grid-template-columns: repeat(9, 1fr) 3px; padding-left: 1px; }

.dropdown { position: relative; }
.menu {
  position: absolute;
  z-index: 5;
  top: 31px;
  left: 0;
  width: 177px;
  background: #fff;
  border: 1px solid #bcbcbc;
  box-shadow: 1px 1px 2px #0006;
  font-weight: 600;
}
.menu h3 { height: 9px; line-height: 9px; padding-left: 3px; background: #ececec; color: #444; }
.menu button { display: flex; align-items: center; gap: 9px; width: 100%; height: 22px; padding-left: 5px; position: relative; }
.menu button svg { width: 16px; height: 15px; }
.menu .hover { background: #cfe0ef; }
.menu .hover::after { content: ""; position: absolute; inset: -2px; border: 2px solid #ee1111; }
.menu button .cursor { position: absolute; left: 97px; top: 11px; width: 6px; height: 10px; }

.workspace { flex: 1; display: flex; padding-left: 3px; gap: 2px; }
.left, .right { flex: 1; display: flex; flex-direction: column; min-width: 0; }
.strip { height: 13px; display: flex; align-items: flex-end; padding-bottom: 1px; }
.strip.end { justify-content: flex-end; padding: 0 2px 4px 0; }
.doctab { display: flex; align-items: center; gap: 2px; background: #cbcbcb; color: #666; height: 10px; padding: 0 3px; }
.pane { flex: 1; display: flex; flex-direction: column; border: solid #d4d4d4; border-width: 0 1px 1px; }
.rulers { flex: 1; display: grid; grid-template: 12px 1fr / 11px 1fr; }
.corner { width: 11px; height: 12px; background: #f4f4f4; }
.rtop { width: 100%; height: 12px; background: linear-gradient(#cdeafa, #fff); }
.rleft { width: 11px; height: 100%; background: linear-gradient(90deg, #cdeafa, #fff); }
.rulers svg text { font-size: 5px; text-anchor: middle; fill: #333; }
.drawing, .scene { width: 100%; height: 100%; min-height: 0; background: #fff; }
.rulers .drawing text { font-family: "Liberation Sans", Arial, sans-serif; }
.rulers .drawing .sigma { font-size: 23px; fill: #000; }
.rulers .drawing .bignum { font-size: 52px; fill: #00f; }
.scene { flex: 1; }
.scene text { text-anchor: middle; font-family: "Liberation Sans", Arial, sans-serif; }
.scene .sigma3d { font-size: 17px; fill: #f5d90c; }
.scene .cube { font-size: 4px; fill: #dde6ee; font-weight: bold; }
.scene .axis { font-size: 6px; fill: #444; text-anchor: start; }

.layers { height: 11px; display: flex; background: #e1e1e1; color: #222; }
.nav { width: 9px; height: 10px; background: #f3f3f3; border: 1px solid #ccc; color: #aaa; }
.nav svg { width: 7px; height: 7px; }
.nav.on { color: #2a7cc8; }
.combo { width: 58px; height: 10px; background: #f0f0f0; border: 1px solid #bbb; display: flex; align-items: center; gap: 2px; padding: 0 2px; }
.combo .arrow { margin-left: auto; }
.left .combo { padding-left: 16px; }
.tabs { margin-left: auto; display: flex; align-items: center; padding-right: 1px; gap: 1px; }
.tabs button { display: flex; align-items: center; height: 10px; padding: 0 3px 0 1px; background: #f3f3f3; border: 1px solid #c8c8c8; border-top: 0; border-radius: 0 0 4px 1px; }
.tabs button svg { width: 6px; height: 6px; }
.tabs .on { background: #dcf6fb; font-weight: bold; color: #000; }
.tabs > .arrow { margin: 0 2px 0 3px; }
.status { height: 10px; display: flex; align-items: center; background: #0078d7; color: #fff; padding: 0 6px 0 4px; }
.coords { margin-left: 9px; }
.modes { margin-left: auto; display: flex; gap: 2px; }
.modes i { font-style: normal; color: #4a9fe2; }
.status .arrow { margin-left: 10px; border-top-color: #fff; }
.idle { background: #eeeeee; color: #fff; }
.idle .modes i { color: #f8f8f8; }

.side { width: 12px; padding-top: 1px; }
.sidetab { display: flex; flex-direction: column; align-items: center; gap: 2px; padding: 1px 0 2px; border-right: 1px solid #ccc; }
.sidetab span { writing-mode: vertical-rl; }

.dock { height: 15px; border-bottom: 1px solid #777; padding-left: 3px; }
.docktab { display: inline-flex; align-items: center; gap: 2px; height: 14px; padding-top: 2px; border-bottom: 2px solid #c6c6c6; }
```
